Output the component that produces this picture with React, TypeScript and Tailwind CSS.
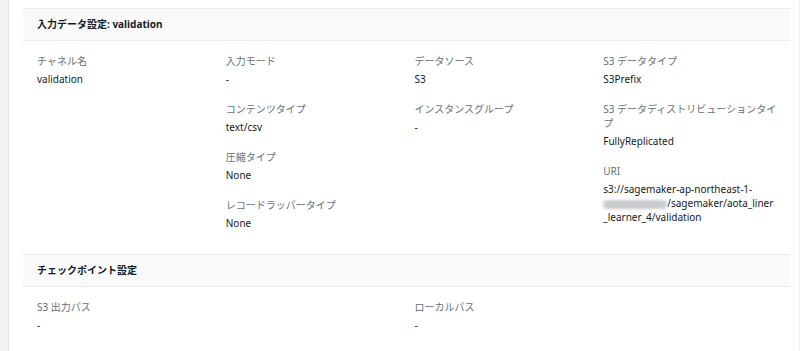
import React from "react";

type Field = { label: React.ReactNode; value: React.ReactNode };

const font = { fontFamily: '"Noto Sans", "Noto Sans CJK JP", sans-serif' };

function FieldItem({ label, value }: Field) {
  return (
    <div className="flex flex-col gap-[4px]">
      <div className="text-[10px] leading-[14px] text-[#687078] whitespace-nowrap">{label}</div>
      <div className="text-[10px] leading-[14px] text-[#16191f] whitespace-nowrap">{value}</div>
    </div>
  );
}

function Column({ fields }: { fields: Field[] }) {
  return (
    <div className="flex flex-col gap-[16px]">
      {fields.map((f, i) => (
        <FieldItem key={i} label={f.label} value={f.value} />
      ))}
    </div>
  );
}

function SectionHeader({ title }: { title: string }) {
  return (
    <div className="h-[33px] flex items-center px-[14px] bg-[#fafafa] border-y border-[#eaeded]">
      <h2 className="text-[10px] font-bold text-[#16191f]">{title}</h2>
    </div>
  );
}

export default function App() {
  const inputColumns: Field[][] = [
    [{ label: "チャネル名", value: "validation" }],
    [
      { label: "入力モード", value: "-" },
      { label: "コンテンツタイプ", value: "text/csv" },
      { label: "圧縮タイプ", value: "None" },
      { label: "レコードラッパータイプ", value: "None" },
    ],
    [
      { label: "データソース", value: "S3" },
      { label: "インスタンスグループ", value: "-" },
    ],
    [
      { label: "S3 データタイプ", value: "S3Prefix" },
      {
        label: (
          <>
            S3 データディストリビューションタイ
            <br />プ
          </>
        ),
        value: "FullyReplicated",
      },
      {
        label: "URI",
        value: (
          <>
            s3://sagemaker-ap-northeast-1-
            <br />
            <span className="inline-block align-middle w-[64px] h-[9px] bg-[#c9cccf] blur-[1.5px] rounded-sm" />
            /sagemaker/aota_liner
            <br />
            _learner_4/validation
          </>
        ),
      },
    ],
  ];

  return (
    <div className="w-[800px] h-[351px] flex bg-white overflow-hidden" style={font}>
      {/* side rail */}
      <div className="w-[9px] shrink-0 bg-[#f2f3f3] border-r border-[#e4e7e7]" />

      <main className="flex-1 pt-[8px] pl-[14px] pr-[9px] border-r border-[#f1f1f1]">
        <section>
          <SectionHeader title="入力データ設定: validation" />
          <div className="grid grid-cols-4 gap-x-[16px] px-[14px] pt-[13px] pb-[24px]">
            {inputColumns.map((col, i) => (
              <Column key={i} fields={col} />
            ))}
          </div>
        </section>

        <section>
          <SectionHeader title="チェックポイント設定" />
          <div className="grid grid-cols-4 gap-x-[16px] px-[14px] pt-[13px] pb-[14px]">
            <div className="col-span-2">
              <FieldItem label="S3 出力パス" value="-" />
            </div>
            <div className="col-span-2">
              <FieldItem label="ローカルパス" value="-" />
            </div>
          </div>
        </section>
      </main>
    </div>
  );
}
